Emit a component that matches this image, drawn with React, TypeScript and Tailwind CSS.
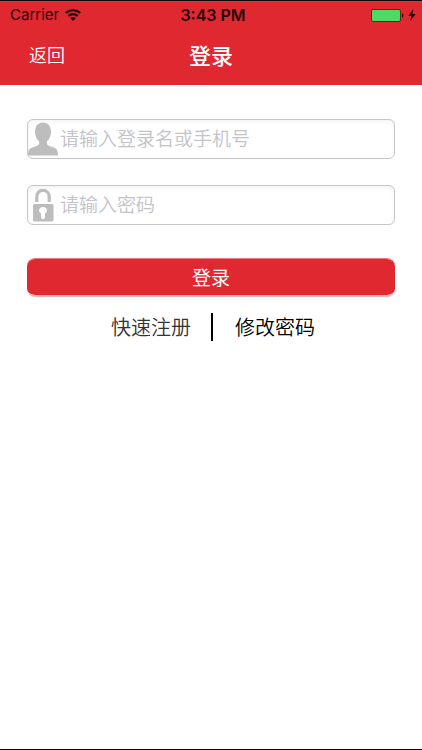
import { useState } from 'react';
import type { FormEvent, ReactNode } from 'react';

const WifiIcon = () => (
  <svg width="16" height="12" viewBox="0 0 16 12" fill="none" stroke="#1c0405" strokeWidth="2.1">
    <path d="M0.8 4.1C4.8 0.3 11.2 0.3 15.2 4.1" />
    <path d="M3.3 6.9C5.9 4.5 10.1 4.5 12.7 6.9" />
    <path d="M5.2 9C6.8 7.6 9.2 7.6 10.8 9L8 12Z" fill="#1c0405" stroke="none" />
  </svg>
);

const BatteryIcon = () => (
  <svg width="33" height="13" viewBox="0 0 33 13">
    <rect x="0.5" y="0.5" width="29" height="12" rx="1.5" fill="#4cd964" stroke="#5e2a16" />
    <path d="M31 4.3C32.8 4.8 32.8 8.2 31 8.7Z" fill="#1c0405" />
  </svg>
);

const BoltIcon = () => (
  <svg width="8" height="12" viewBox="0 0 8 12" fill="#1c0405">
    <path d="M5.4 0L0.4 6.7H3.4L2.2 12L7.6 5H4.5Z" />
  </svg>
);

const UserIcon = () => (
  <svg width="30" height="34" viewBox="0 0 30 34" fill="#bdbdbd">
    <path d="M15 0.5C19.8 0.5 23 4.2 23 9.6C23 14.2 21.2 17.6 18.8 19.6C18.6 22.4 19.4 23.3 22 24.2L26.4 25.8C29 26.8 30 29 30 33.6H0C0 29 1 26.8 3.6 25.8L8 24.2C10.6 23.3 11.4 22.4 11.2 19.6C8.8 17.6 7 14.2 7 9.6C7 4.2 10.2 0.5 15 0.5Z" />
  </svg>
);

const LockIcon = () => (
  <svg width="30" height="34" viewBox="0 0 30 34">
    <path d="M8.8 14V9C8.8 4.8 11.4 2.3 15 2.3C18.6 2.3 21.2 4.8 21.2 9V14" fill="none" stroke="#bdbdbd" strokeWidth="3.2" />
    <rect x="5" y="16" width="20.5" height="17.5" rx="1.5" fill="#bdbdbd" />
    <path d="M15 19C17.3 19 18.9 20.5 18.9 22.5C18.9 23.8 18.2 24.9 17 25.5V29C17 31.8 13 31.8 13 29V25.5C11.8 24.9 11.1 23.8 11.1 22.5C11.1 20.5 12.7 19 15 19Z" fill="#fff" />
  </svg>
);

interface FieldProps {
  id: string;
  type: string;
  label: string;
  icon: ReactNode;
  value: string;
  onChange: (value: string) => void;
}

const Field = ({ id, type, label, icon, value, onChange }: FieldProps) => (
  <div className="flex h-10 items-center gap-0.5 rounded-md border border-[#c6c6c6] bg-white inset-shadow-sm">
    <label htmlFor={id} className="shrink-0" aria-label={label}>
      {icon}
    </label>
    <input
      id={id}
      type={type}
      value={value}
      placeholder={label}
      onChange={(e) => onChange(e.target.value)}
      className="h-full min-w-0 flex-1 bg-transparent pb-1 text-[19px] font-[350] text-black outline-none placeholder:text-[#c3c3c9]"
    />
  </div>
);

const StatusBar = () => (
  <div className="grid h-[26px] grid-cols-3 items-center pr-1.5 pl-2.5 font-['Inter','Noto_Sans_CJK_SC',sans-serif] text-base text-[#1c0405]">
    <div className="flex items-center gap-1.5">
      <span className="text-[15px]">Carrier</span>
      <WifiIcon />
    </div>
    <span className="text-center font-semibold">3:43 PM</span>
    <div className="flex items-center justify-end gap-1">
      <BatteryIcon />
      <BoltIcon />
    </div>
  </div>
);

const App = () => {
  const [account, setAccount] = useState('');
  const [password, setPassword] = useState('');

  const handleSubmit = (e: FormEvent) => {
    e.preventDefault();
  };

  return (
    <div className="flex min-h-screen flex-col border-y border-[#120608] bg-white font-['Noto_Sans_CJK_SC',sans-serif]">
      <header className="border-t border-[#b8444a] bg-[#e02830]">
        <StatusBar />
        <div className="grid h-[57px] grid-cols-3 items-center pb-1">
          <button type="button" className="justify-self-start pb-0.5 pl-[29px] text-lg font-[350] text-white">
            返回
          </button>
          <h1 className="text-center text-[22px] font-medium text-white">登录</h1>
        </div>
      </header>

      <main className="flex-1 px-[27px] pt-[34px]">
        <form onSubmit={handleSubmit}>
          <div className="flex flex-col gap-[26px]">
            <Field
              id="account"
              type="text"
              label="请输入登录名或手机号"
              icon={<UserIcon />}
              value={account}
              onChange={setAccount}
            />
            <Field
              id="password"
              type="password"
              label="请输入密码"
              icon={<LockIcon />}
              value={password}
              onChange={setPassword}
            />
          </div>
          <button
            type="submit"
            className="mt-[33px] h-[39px] w-full rounded-lg border-t border-b-2 border-t-[#f0787e] border-b-[#f5b5b8] bg-[#e02830] bg-clip-padding text-[19px] text-white"
          >
            登录
          </button>
        </form>

        {/* Secondary links */}
        <div className="mt-4 grid grid-cols-[1fr_2px_1fr] items-center pl-0.5 text-xl">
          <a href="#register" className="justify-self-end pr-5 font-[350] text-[#333]">
            快速注册
          </a>
          <span className="h-7 bg-black"></span>
          <a href="#password" className="justify-self-start pl-[22px] font-[350] text-black">
            修改密码
          </a>
        </div>
      </main>
    </div>
  );
};

export default App;
